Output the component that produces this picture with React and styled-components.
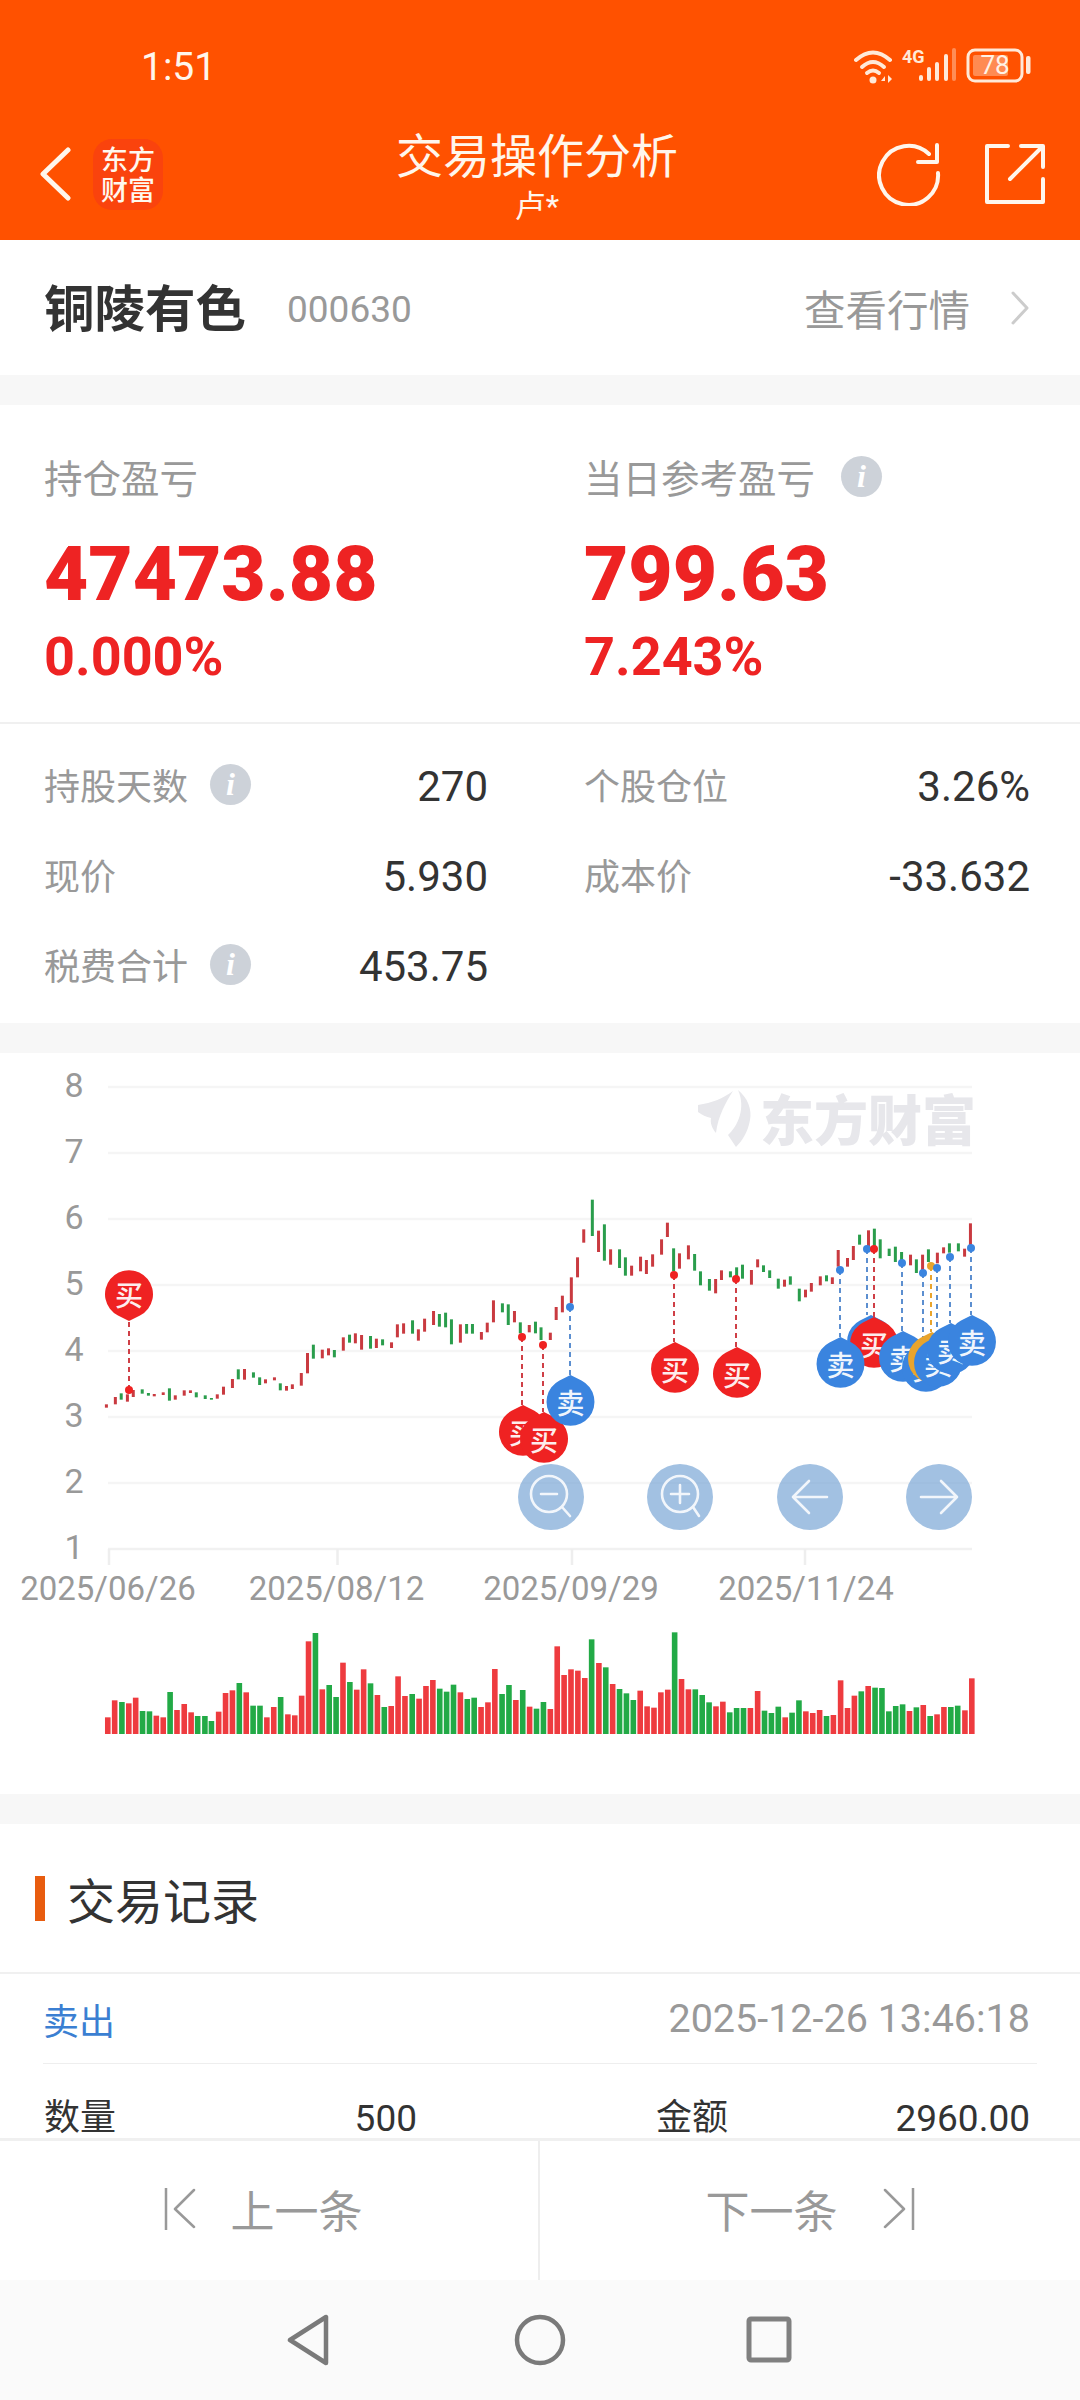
import React from 'react';
import styled, { createGlobalStyle } from 'styled-components';

const GlobalStyle = createGlobalStyle`
  html, body {
    margin: 0;
    padding: 0;
    background: #f7f7f7;
  }
  * {
    box-sizing: border-box;
  }
`;

// chart data, [x, top, bottom, colour] in chart units
const candlesA = [
  [309,1063,1073,'r'],[335,1041,1063,'r'],[352,1030,1049,'g'],[370,1033,1055,'r'],[387,1020,1041,'r'],[413,1018,1031,'g'],
  [431,1029,1037,'g'],[448,1032,1039,'r'],[474,1027,1035,'r'],[492,1015,1052,'g'],[509,1036,1049,'r'],[535,1021,1037,'r'],
  [553,1021,1029,'r'],[570,1027,1042,'g'],[596,1036,1047,'g'],[614,1044,1049,'g'],[631,1033,1046,'r'],[649,1010,1034,'r'],
  [675,987,1014,'r'],[692,958,988,'g'],[710,957,989,'r'],[736,967,983,'g'],[754,982,1005,'g'],[771,988,1000,'r'],
  [797,982,991,'r'],[814,1000,1021,'g'],[832,1008,1022,'r'],[849,1003,1017,'r'],[875,969,1007,'r'],[893,909,970,'r'],
  [910,884,926,'g'],[936,899,925,'r'],[954,895,916,'r'],[971,900,922,'g'],[997,862,902,'r'],[1015,854,878,'g'],
  [1032,850,880,'r'],[1050,855,899,'r'],[1076,858,896,'g'],[1093,866,894,'r'],[1111,868,886,'g'],[1137,877,894,'r'],
  [1154,823,862,'r'],[1172,820,851,'r'],[1198,811,851,'g'],[1215,838,872,'r'],[1233,806,845,'r'],[1259,783,825,'r'],
  [1276,792,830,'g'],[1294,788,832,'g'],[1311,808,883,'g'],[1337,823,878,'r'],[1355,822,851,'g'],[1372,822,851,'g'],
  [1398,846,869,'r'],[1415,818,847,'r'],[1433,751,817,'r'],[1459,760,787,'g'],[1476,763,825,'g'],[1494,783,817,'r'],
  [1511,817,850,'g'],[1537,825,847,'r'],[1555,815,850,'g'],
];

const candlesB = [
  [3,832,870,'g'],[30,848,870,'r'],[47,771,810,'r'],[65,737,787,'r'],[91,682,760,'r'],[109,622,682,'r'],[127,538,578,'r'],
  [152,449,558,'g'],[170,542,606,'r'],[187,523,632,'g'],[205,598,644,'r'],[231,598,654,'g'],[248,622,677,'g'],[266,647,677,'r'],
  [292,620,664,'r'],[309,630,672,'r'],[327,613,650,'r'],[353,568,614,'r'],[370,518,561,'r'],[388,595,664,'g'],[405,610,656,'r'],
  [431,586,628,'r'],[449,612,662,'g'],[466,664,706,'g'],[492,687,722,'g'],[510,687,730,'r'],[527,661,690,'r'],[553,664,682,'g'],
  [571,652,680,'g'],[588,644,686,'g'],[614,660,704,'r'],[632,628,652,'r'],[649,646,666,'g'],[667,661,684,'g'],[692,686,716,'g'],
  [710,689,710,'r'],[727,679,704,'g'],[753,716,754,'g'],[771,719,742,'r'],[788,699,725,'r'],[814,679,706,'r'],[832,676,694,'g'],
  [849,682,702,'r'],[866,600,650,'r'],[893,624,650,'r'],[910,588,630,'r'],[928,554,584,'g'],[954,541,590,'r'],[971,536,590,'g'],
  [988,568,625,'g'],[1014,596,618,'g'],[1032,590,636,'g'],[1050,606,630,'g'],[1076,614,646,'r'],[1093,628,669,'g'],[1111,614,660,'r'],
  [1128,598,636,'g'],[1154,608,640,'r'],[1172,592,610,'r'],[1189,580,608,'g'],[1215,580,604,'g'],[1233,596,620,'r'],[1250,520,590,'r'],
];

const volumesA = [
  [313,892,'r'],[333,841,'r'],[354,846,'g'],[374,850,'r'],[394,833,'r'],[414,873,'g'],[434,874,'g'],[454,887,'r'],[474,892,'r'],
  [494,816,'g'],[514,870,'r'],[535,852,'r'],[555,877,'r'],[574,888,'g'],[595,888,'g'],[614,903,'g'],[635,875,'r'],[655,819,'r'],
  [675,811,'r'],[695,789,'g'],[715,817,'r'],[735,857,'g'],[755,857,'g'],[775,892,'r'],[795,861,'r'],[815,831,'g'],[836,883,'r'],
  [856,886,'r'],[876,827,'r'],[896,664,'r'],[916,639,'g'],[936,808,'r'],[956,795,'g'],[976,831,'g'],[996,728,'r'],[1016,786,'g'],
  [1036,809,'r'],[1056,748,'r'],[1076,790,'g'],[1096,825,'r'],[1116,861,'g'],[1136,858,'r'],[1156,769,'r'],[1176,828,'r'],
  [1197,822,'g'],[1217,836,'r'],[1237,798,'r'],[1257,780,'r'],[1277,806,'g'],[1297,815,'g'],[1317,794,'g'],[1337,817,'r'],
  [1357,837,'g'],[1377,833,'g'],[1397,861,'r'],[1417,847,'r'],[1437,747,'r'],[1458,822,'g'],[1478,795,'g'],[1498,840,'r'],
  [1518,810,'g'],[1538,860,'r'],[1558,866,'g'],
];

const volumesB = [
  [10,846,'g'],[30,867,'r'],[50,679,'r'],[70,765,'r'],[90,748,'r'],[110,752,'r'],[130,774,'r'],[150,658,'g'],[171,729,'r'],
  [191,742,'g'],[211,792,'r'],[231,807,'g'],[251,820,'g'],[271,840,'g'],[291,812,'r'],[311,859,'r'],[331,863,'r'],[351,817,'r'],
  [371,809,'r'],[391,637,'g'],[411,777,'r'],[431,808,'r'],[451,808,'g'],[471,825,'g'],[491,847,'g'],[511,859,'r'],[531,845,'r'],
  [551,877,'g'],[571,864,'g'],[591,864,'g'],[611,864,'r'],[632,813,'r'],[652,872,'g'],[672,879,'g'],[692,860,'g'],[712,892,'r'],
  [732,878,'g'],[752,841,'g'],[772,874,'r'],[792,879,'r'],[812,870,'r'],[832,888,'g'],[852,885,'r'],[873,781,'r'],[893,864,'r'],
  [913,827,'r'],[933,814,'g'],[953,798,'r'],[973,803,'g'],[993,804,'g'],[1013,874,'g'],[1033,858,'g'],[1053,853,'g'],[1073,873,'r'],
  [1093,862,'g'],[1113,855,'r'],[1133,888,'g'],[1153,883,'r'],[1173,861,'r'],[1193,861,'g'],[1213,857,'g'],[1234,871,'r'],[1254,775,'r'],
];

const markers = [
  { kind: 'buy', x: 129, y: 1390, cx: 129, cy: 1294, down: true },
  { kind: 'buy', x: 522, y: 1337, cx: 523, cy: 1432 },
  { kind: 'buy', x: 543, y: 1345, cx: 544, cy: 1439 },
  { kind: 'sell', x: 570, y: 1307, cx: 570.5, cy: 1402 },
  { kind: 'buy', x: 674, y: 1275, cx: 675, cy: 1369 },
  { kind: 'buy', x: 736, y: 1279, cx: 737, cy: 1374 },
  { kind: 'sell', x: 867, y: 1249, cx: 871, cy: 1342 },
  { kind: 'buy', x: 874, y: 1249, cx: 874, cy: 1344 },
  { kind: 'sell', x: 840, y: 1270, cx: 840.5, cy: 1364 },
  { kind: 'sell', x: 902, y: 1263, cx: 903, cy: 1358 },
  { kind: 'sell', x: 923, y: 1273, cx: 926, cy: 1368 },
  { kind: 'other', x: 931, y: 1266, cx: 932, cy: 1359 },
  { kind: 'sell', x: 937, y: 1268, cx: 938, cy: 1363 },
  { kind: 'sell', x: 950, y: 1257, cx: 951, cy: 1350 },
  { kind: 'sell', x: 971, y: 1248, cx: 972, cy: 1342 },
];

const markerColors = {
  buy: { fill: '#ef2222', line: '#cf3f46', label: '买' },
  sell: { fill: '#3a84df', line: '#5c8fd0', label: '卖' },
  other: { fill: '#e9a42c', line: '#e9a42c', label: '' },
};

const gridLines = [1087, 1153, 1219, 1285, 1351, 1417, 1483];
const yLabels = [8, 7, 6, 5, 4, 3, 2, 1];
const dateTicks = [
  { x: 109, textX: 108, label: '2025/06/26' },
  { x: 337.5, textX: 336.5, label: '2025/08/12' },
  { x: 572, textX: 571, label: '2025/09/29' },
  { x: 805, textX: 806, label: '2025/11/24' },
];

const candleX = (v, base) => base + v / 2.904;

const Page = styled.div`
  width: 1080px;
  height: 2400px;
  display: flex;
  flex-direction: column;
  overflow: hidden;
  background: #f7f7f7;
  font-family: Roboto, "Noto Sans CJK SC", sans-serif;
  color: #333;
`;

const Header = styled.header`
  height: 240px;
  flex: none;
  background: #ff5100;
  color: #fff6ec;
`;

const StatusBar = styled.div`
  height: 112px;
  padding: 40px 46px 0 141px;
  display: flex;
  justify-content: space-between;
  align-items: flex-start;
`;

const Clock = styled.span`
  font-size: 39px;
  line-height: 54px;
`;

const TitleBar = styled.div`
  height: 128px;
  display: grid;
  grid-template-columns: 260px 1fr 260px;
  align-items: center;
  padding: 0 34px 4px;
`;

const LeftTools = styled.div`
  display: flex;
  align-items: center;
  gap: 22px;
  padding-left: 6px;
`;

const RightTools = styled.div`
  display: flex;
  align-items: center;
  justify-content: flex-end;
  gap: 43px;
`;

const LogoTile = styled.div`
  width: 70px;
  height: 71px;
  border-radius: 19px;
  background: #fa430d;
  color: #fff8ee;
  font-size: 27px;
  font-weight: 500;
  line-height: 30px;
  text-align: center;
  padding-top: 5px;
  font-family: "Noto Sans CJK SC", sans-serif;
`;

const TitleBlock = styled.div`
  text-align: center;
  padding: 2px 6px 0 0;
`;

const Title = styled.div`
  font-size: 47px;
  line-height: 62px;
  margin-bottom: 1px;
`;

const Subtitle = styled.div`
  font-size: 31px;
  line-height: 36px;
`;

const StockRow = styled.section`
  height: 135px;
  flex: none;
  background: #fff;
  display: flex;
  align-items: center;
  padding: 0 50px 0 44px;
`;

const StockName = styled.h1`
  margin: 4px 0 0;
  font-size: 50.5px;
  font-weight: 700;
  line-height: 70px;
  color: #333;
`;

const StockCode = styled.span`
  margin: 4px 0 0 41px;
  font-size: 37px;
  color: #999;
`;

const QuoteLink = styled.div`
  margin-left: auto;
  display: flex;
  align-items: center;
  gap: 40px;
  font-size: 41.5px;
  color: #999;
`;

const Scroller = styled.div`
  flex: 1;
  min-height: 0;
  overflow: hidden;
`;

const Card = styled.section`
  background: #fff;
  margin-top: ${(p) => p.$gap ?? 30}px;
`;

const Summary = styled.div`
  display: grid;
  grid-template-columns: 540px 1fr;
  padding: 44px 0 33px 44px;
  border-bottom: 2px solid #f0f0f0;
`;

const SummaryLabel = styled.div`
  height: 56px;
  padding-bottom: 2px;
  display: flex;
  align-items: center;
  font-size: 38.5px;
  color: #999;
  gap: 26px;
`;

const BigValue = styled.div`
  margin-top: 24px;
  height: 90px;
  line-height: 90px;
  font-size: 76.5px;
  font-weight: 900;
  color: #ee2323;
`;

const Percent = styled.div`
  margin-top: 5px;
  height: 65px;
  line-height: 65px;
  font-size: 54px;
  font-weight: 700;
  color: #ee2323;
`;

const InfoBadge = styled.span`
  width: 41px;
  height: 41px;
  border-radius: 50%;
  background: #cdd2d9;
  color: #fff;
  display: inline-flex;
  align-items: center;
  justify-content: center;
  font-family: "Liberation Serif", serif;
  font-style: italic;
  font-weight: 700;
  font-size: 32px;
`;

const StatsGrid = styled.div`
  display: grid;
  grid-template-columns: 444px 446px;
  column-gap: 96px;
  padding: 17px 0 12px 44px;
`;

const StatRow = styled.div`
  height: 90px;
  display: flex;
  align-items: center;
`;

const StatLabel = styled.span`
  display: flex;
  align-items: center;
  gap: 22px;
  margin-top: -4px;
  font-size: 36px;
  color: #999;
`;

const StatValue = styled.span`
  margin-left: auto;
  font-size: 42px;
  color: #333;
`;

const ChartSvg = styled.svg`
  display: block;
  width: 1080px;
  height: 741px;
  font-family: Roboto, "Noto Sans CJK SC", sans-serif;
`;

const AxisText = styled.text`
  fill: #999;
  font-size: ${(p) => p.$size}px;
  text-anchor: middle;
  dominant-baseline: central;
`;

const Watermark = styled.text`
  fill: #e7e7eb;
  font-size: 54px;
  font-weight: 900;
  font-family: "Noto Sans CJK SC", sans-serif;
  dominant-baseline: central;
`;

const MarkerLabel = styled.text`
  fill: #fff;
  opacity: 0.92;
  font-size: 28px;
  font-weight: 500;
  text-anchor: middle;
  dominant-baseline: central;
  font-family: "Noto Sans CJK SC", sans-serif;
`;

const RecordsHead = styled.div`
  height: 150px;
  display: flex;
  align-items: center;
  padding: 0 0 0 35px;
  border-bottom: 2px solid #f0f0f0;
`;

const HeadBar = styled.span`
  width: 10px;
  height: 45px;
  background: #e85c0f;
`;

const HeadTitle = styled.h2`
  margin: 0 0 0 22px;
  font-size: 48px;
  font-weight: 400;
  color: #333;
`;

const TradeRow = styled.div`
  height: 90px;
  margin: 0 43px;
  display: flex;
  align-items: center;
  justify-content: space-between;
  border-bottom: 1.5px solid #eee;
  padding: 0 7px 0 0;
`;

const TradeType = styled.span`
  font-size: 36px;
  color: #3b7fd2;
`;

const TradeTime = styled.span`
  font-size: 39.5px;
  color: #999;
`;

const DetailGrid = styled.div`
  display: grid;
  grid-template-columns: 373px 374px;
  column-gap: 239px;
  padding-left: 44px;
  height: 108px;
  align-items: center;
  font-size: 36px;
  line-height: 40px;
  color: #333;
`;

const DetailCell = styled.div`
  display: flex;
  justify-content: space-between;
  align-items: center;
`;

const DetailValue = styled.span`
  font-size: 37px;
  line-height: 32px;
  margin-top: 2px;
`;

const Pager = styled.div`
  height: 142px;
  flex: none;
  display: flex;
  background: #fff;
  border-top: 3px solid #f0f0f0;
`;

const PagerButton = styled.div`
  width: 50%;
  display: flex;
  align-items: center;
  justify-content: center;
  gap: ${(p) => p.$gap}px;
  padding-right: ${(p) => p.$shift || 0}px;
  padding-bottom: 4px;
  font-size: 44px;
  color: #999;
  border-right: ${(p) => (p.$divider ? '2px solid #eee' : 'none')};
`;

const NavBar = styled.nav`
  height: 120px;
  flex: none;
  display: flex;
  align-items: center;
  justify-content: center;
  gap: 180px;
  background: #fafafa;
`;

const StatusIcons = () => (
  <svg width="180" height="46" viewBox="0 -6 180 46" style={{ marginTop: 2 }}>
    <g fill="none" stroke="#ffe9d8" strokeLinecap="round" strokeWidth="4">
      <path d="M2 12 Q19 -3 36 12" />
      <path d="M8 19 Q19 9 30 19" />
      <path d="M13 25 Q19 20 25 25" />
    </g>
    <circle cx="19" cy="32" r="3.5" fill="#ffe9d8" />
    <path d="M27 33 L31 28 V33 Z M34 27 V35 L38 31 Z" fill="#ffe9d8" />
    <text x="48" y="15" fill="#ffe9d8" fontSize="18" fontWeight="700" fontFamily="Roboto, sans-serif">4G</text>
    <g fill="#ffe9d8">
      <rect x="65" y="27" width="4" height="6" rx="2" />
      <rect x="73" y="19" width="4" height="14" rx="2" />
      <rect x="81" y="14" width="4" height="19" rx="2" />
      <rect x="90" y="6" width="4" height="27" rx="2" />
      <rect x="98" y="0" width="4" height="33" rx="2" opacity="0.4" />
    </g>
    <rect x="114" y="2" width="54" height="31" rx="7" fill="none" stroke="#ffe9d8" strokeWidth="3" />
    <rect x="119" y="7" width="35" height="21" rx="2" fill="#ffe9d8" opacity="0.38" />
    <text x="141" y="26" fill="#fff2e6" fontSize="26" textAnchor="middle" fontFamily="Roboto, sans-serif">78</text>
    <rect x="172" y="8" width="4.5" height="18" rx="2" fill="#ffe9d8" />
  </svg>
);

const IconStroke = ({ w, h, width = 4, color = '#fff6ec', children }) => (
  <svg width={w} height={h} viewBox={`0 0 ${w} ${h}`} fill="none" stroke={color} strokeWidth={width} strokeLinecap="round" strokeLinejoin="round">
    {children}
  </svg>
);

const Balloon = ({ m }) => {
  const c = markerColors[m.kind];
  const tip = m.down ? m.cy + 27 : m.cy - 27;
  const shape = m.down
    ? `M0 27 L11 21.5 A24 24 0 1 0 -11 21.5 Z`
    : `M0 -27 L11 -21.5 A24 24 0 1 1 -11 -21.5 Z`;
  return (
    <g>
      <line x1={m.x} y1={m.y} x2={m.x} y2={tip} stroke={c.line} strokeWidth="2" strokeDasharray="5 4" />
      <circle cx={m.x} cy={m.y} r="4" fill={c.fill} />
      <g transform={`translate(${m.cx} ${m.cy})`}>
        <path d={shape} fill={c.fill} />
        {c.label && <MarkerLabel x="0" y="0">{c.label}</MarkerLabel>}
      </g>
    </g>
  );
};

const ZoomButton = ({ cx, children }) => (
  <g transform={`translate(${cx} 1497)`}>
    <circle r="33" fill="#7aa6d6" opacity="0.7" />
    <g fill="none" stroke="#f2f6fb" strokeWidth="2.6" strokeLinecap="round" strokeLinejoin="round">
      {children}
    </g>
  </g>
);

const Chart = () => {
  const candles = [
    ...candlesA.map(([x, t, b, c]) => ({ x: candleX(x, 0), t, b, c })),
    ...candlesB.map(([x, t, b, c]) => ({ x: candleX(x, 540), t, b, c })),
  ];
  const volumes = [
    ...volumesA.map(([x, t, c]) => ({ x: candleX(x, 0), t, c })),
    ...volumesB.map(([x, t, c]) => ({ x: candleX(x, 540), t, c })),
  ];

  return (
    <ChartSvg viewBox="0 1053 1080 741">
      {gridLines.map((y) => (
        <line key={y} x1="108" x2="972" y1={y} y2={y} stroke="#f5f5f5" strokeWidth="2.5" />
      ))}
      <line x1="108" x2="972" y1="1549" y2="1549" stroke="#f1f1f1" strokeWidth="2.5" />
      {dateTicks.map((d) => (
        <g key={d.label}>
          <line x1={d.x} x2={d.x} y1="1549" y2="1565" stroke="#eeeeee" strokeWidth="2.5" />
          <AxisText $size={33} x={d.textX} y="1588">{d.label}</AxisText>
        </g>
      ))}
      {yLabels.map((n, i) => (
        <AxisText key={n} $size={34} x="74" y={1085 + i * 66}>{n}</AxisText>
      ))}

      <path d="M698 1105 C712 1103 724 1098 733 1091 C726 1102 718 1116 716 1133 C712 1128 710 1123 711 1118 C706 1117 702 1115 698 1112 Z" fill="#e7e7eb" />
      <path d="M738 1090 C748 1098 752 1110 750 1120 C748 1132 742 1141 736 1147 L728 1135 C738 1126 746 1108 738 1090 Z" fill="#e7e7eb" />
      <Watermark x="760" y="1117">东方财富</Watermark>

      {candles.map((d, i) => (
        <rect
          key={i}
          x={d.x - 1.5}
          width="3"
          y={1050 + d.t / 3}
          height={(d.b - d.t) / 3}
          fill={d.c === 'r' ? '#c93a40' : '#2a9d4c'}
        />
      ))}

      {volumes.map((d, i) => (
        <rect
          key={i}
          x={d.x - 2.8}
          width="5.6"
          y={1420 + d.t / 3}
          height={1734 - (1420 + d.t / 3)}
          fill={d.c === 'r' ? '#ee3b3f' : '#22aa46'}
        />
      ))}

      {markers.map((m, i) => (
        <Balloon key={i} m={m} />
      ))}

      <ZoomButton cx={551}>
        <circle cx="-2" cy="-3" r="18" />
        <path d="M-10 -3 H6 M11 10 L19 19" />
      </ZoomButton>
      <ZoomButton cx={680}>
        <circle cx="0" cy="-3" r="18" />
        <path d="M-9 -3 H9 M0 -12 V6 M13 10 L19 19" />
      </ZoomButton>
      <ZoomButton cx={810}>
        <path d="M-17 0 H17 M-1 -16 L-17 0 L-1 16" />
      </ZoomButton>
      <ZoomButton cx={939}>
        <path d="M-18 0 H18 M2 -16 L18 0 L2 16" />
      </ZoomButton>
    </ChartSvg>
  );
};

const App = () => (
  <>
    <GlobalStyle />
    <Page>
      <Header>
        <StatusBar>
          <Clock>1:51</Clock>
          <StatusIcons />
        </StatusBar>
        <TitleBar>
          <LeftTools>
            <IconStroke w={31} h={54} width={5}>
              <path d="M28 3 L3 27 L28 51" />
            </IconStroke>
            <LogoTile>东方<br />财富</LogoTile>
          </LeftTools>
          <TitleBlock>
            <Title>交易操作分析</Title>
            <Subtitle>卢*</Subtitle>
          </TitleBlock>
          <RightTools>
            <IconStroke w={64} h={64}>
              <path d="M61 31 A29.5 29.5 0 1 1 52 12" />
              <path d="M60 3 V20 H41" />
            </IconStroke>
            <IconStroke w={62} h={62}>
              <path d="M24 3 H3 V59 H59 V36" />
              <path d="M26 36 L58 4 M37 3 H59 V24" />
            </IconStroke>
          </RightTools>
        </TitleBar>
      </Header>

      <StockRow>
        <StockName>铜陵有色</StockName>
        <StockCode>000630</StockCode>
        <QuoteLink>
          查看行情
          <IconStroke w={20} h={34} width={3} color="#cccccc">
            <path d="M3 2 L17 17 L3 32" />
          </IconStroke>
        </QuoteLink>
      </StockRow>

      <Scroller>
        <Card>
          <Summary>
            <div>
              <SummaryLabel>持仓盈亏</SummaryLabel>
              <BigValue>47473.88</BigValue>
              <Percent>0.000%</Percent>
            </div>
            <div>
              <SummaryLabel>当日参考盈亏<InfoBadge>i</InfoBadge></SummaryLabel>
              <BigValue>799.63</BigValue>
              <Percent>7.243%</Percent>
            </div>
          </Summary>
          <StatsGrid>
            <StatRow>
              <StatLabel>持股天数<InfoBadge>i</InfoBadge></StatLabel>
              <StatValue>270</StatValue>
            </StatRow>
            <StatRow>
              <StatLabel>个股仓位</StatLabel>
              <StatValue>3.26%</StatValue>
            </StatRow>
            <StatRow>
              <StatLabel>现价</StatLabel>
              <StatValue>5.930</StatValue>
            </StatRow>
            <StatRow>
              <StatLabel>成本价</StatLabel>
              <StatValue>-33.632</StatValue>
            </StatRow>
            <StatRow>
              <StatLabel>税费合计<InfoBadge>i</InfoBadge></StatLabel>
              <StatValue>453.75</StatValue>
            </StatRow>
          </StatsGrid>
        </Card>

        <Card>
          <Chart />
        </Card>

        <Card>
          <RecordsHead>
            <HeadBar />
            <HeadTitle>交易记录</HeadTitle>
          </RecordsHead>
          <TradeRow>
            <TradeType>卖出</TradeType>
            <TradeTime>2025-12-26 13:46:18</TradeTime>
          </TradeRow>
          <DetailGrid>
            <DetailCell><span>数量</span><DetailValue>500</DetailValue></DetailCell>
            <DetailCell><span>金额</span><DetailValue>2960.00</DetailValue></DetailCell>
          </DetailGrid>
        </Card>
      </Scroller>

      <Pager>
        <PagerButton $gap={35} $shift={12} $divider>
          <IconStroke w={32} h={42} width={2.5} color="#999999">
            <path d="M2 0 V42 M30 2 L11 21 L30 39" />
          </IconStroke>
          上一条
        </PagerButton>
        <PagerButton $gap={45}>
          下一条
          <IconStroke w={32} h={42} width={2.5} color="#999999">
            <path d="M30 0 V42 M2 2 L21 21 L2 39" />
          </IconStroke>
        </PagerButton>
      </Pager>

      <NavBar>
        <IconStroke w={52} h={52} width={4.5} color="#7a7a7a">
          <path d="M44 3 V49 L8 26 Z" />
        </IconStroke>
        <IconStroke w={52} h={52} width={4.5} color="#7a7a7a">
          <circle cx="26" cy="26" r="23" />
        </IconStroke>
        <IconStroke w={52} h={52} width={5} color="#808080">
          <rect x="3" y="5" width="40" height="41" rx="2" />
        </IconStroke>
      </NavBar>
    </Page>
  </>
);

export default App;
